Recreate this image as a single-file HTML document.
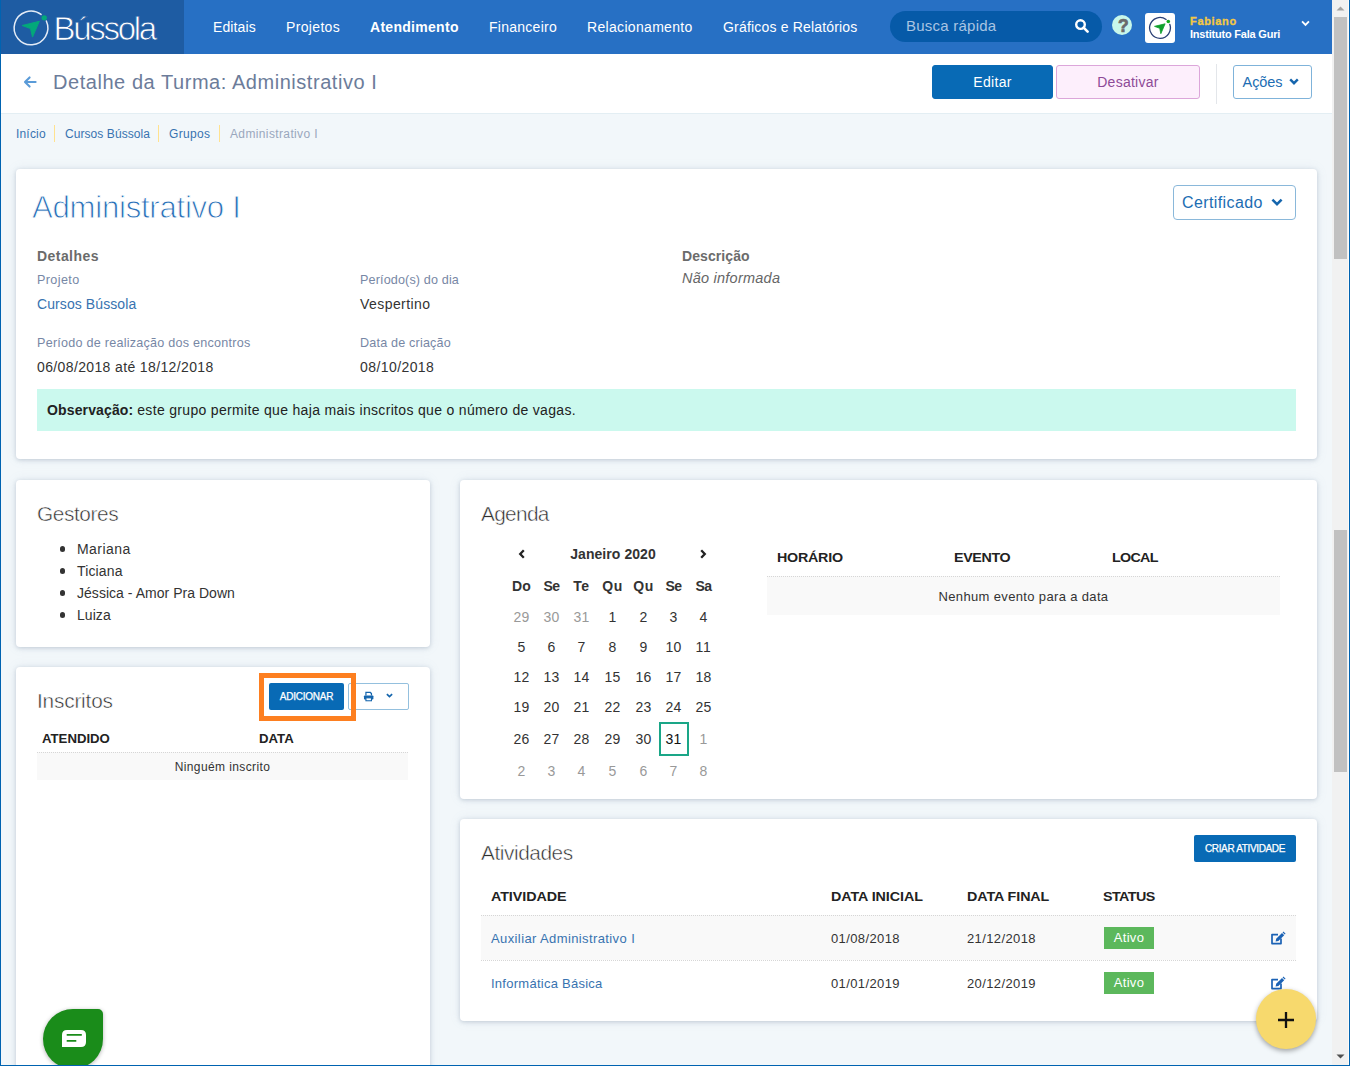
<!DOCTYPE html>
<html lang="pt-BR">
<head>
<meta charset="utf-8">
<title>Detalhe da Turma: Administrativo I</title>
<style>
*{box-sizing:border-box;margin:0;padding:0}
html,body{width:1350px;height:1066px;overflow:hidden}
body{position:relative;background:#f2f7fa;font-family:"Liberation Sans",sans-serif;font-size:14px;color:#222;line-height:20px}
a{text-decoration:none;color:#3873b0}
.abs{position:absolute}
.t{white-space:nowrap;display:inline-block;position:relative}
/* window frame */
#frameL{left:0;top:0;width:1px;height:1066px;background:#0063b1;z-index:50}
#frameR{left:1349px;top:0;width:1px;height:1066px;background:#0063b1;z-index:50}
#frameB{left:0;top:1065px;width:1350px;height:1px;background:#0063b1;z-index:50}
/* scrollbar */
#sb{left:1332px;top:0;width:17px;height:1065px;background:#f1f1f1;z-index:40}
#sb .th{position:absolute;left:2px;width:13px;background:#c1c1c1}
#sb .wl{position:absolute;left:16px;top:0;width:1px;height:1065px;background:#fdfbf8}
#sb svg{position:absolute;left:0}
/* header */
#hdr{left:1px;top:0;width:1331px;height:54px;background:#2770c4}
#logo{left:0;top:0;width:183px;height:54px;background:#1e5ca3}
#logo .name{left:52.6px;top:5.1px;font-size:33px;line-height:46px;color:#fff;font-weight:300;letter-spacing:-1.0px;-webkit-text-stroke:0.75px #1e5ca3}
.nav{top:0;height:53px;line-height:53px;color:#fff;font-size:14px}
#search{left:889px;top:11px;width:212px;height:31px;border-radius:15.5px;background:#065aa8}
#search .ph{left:16px;top:0;line-height:29px;font-size:15px;color:#a9c4e2}
#help{left:1110.9px;top:14.7px;width:20.5px;height:20.5px;border-radius:50%;background:#c8f7ea;color:#6b6b6b;font-weight:700;font-size:17.5px;line-height:21px;text-align:center;-webkit-text-stroke:0.7px #6b6b6b}
#avatar{left:1144px;top:13px;width:30px;height:30px;border-radius:3px;background:#fff}
#uname{left:1189px;top:13.6px;font-size:11px;line-height:14px;font-weight:700;letter-spacing:0.45px;-webkit-text-stroke:0.3px #f3c844;color:#f3c844}
#uorg{left:1189px;top:27px;letter-spacing:-0.29px;font-size:11px;line-height:14px;font-weight:600;color:#fff}
/* subheader */
#sub{left:1px;top:54px;width:1331px;height:60px;background:#fff;border-bottom:1px solid #e3eef3}
#title{left:52px;top:13px;font-size:20px;line-height:30px;color:#6c7c9a}
.btn{position:absolute;top:11px;height:34px;border-radius:3px;text-align:center;line-height:32px;font-size:14px;border:1px solid transparent}
#bEdit{left:931px;width:121px;background:#086ab5;color:#fff;border-color:#086ab5}
#bDes{left:1055px;width:144px;background:#fdeffc;color:#8d4a97;border-color:#dca6da}
#bAc{left:1232px;width:79px;background:#fff;color:#1c6db3;border-color:#7fb3da;font-size:14.5px}
#vsep{left:1215px;top:10px;width:1px;height:40px;background:#e3e6ea}
/* breadcrumb */
.bc{top:124px;font-size:12px;line-height:20px;color:#3873b0}
.bcs{top:125px;width:1px;height:17px;background:#ffe28f}
/* cards */
.card{background:#fff;border-radius:4px;box-shadow:0 1px 4px rgba(95,115,140,.3),0 0 12px rgba(120,150,180,.11)}
.h2{font-size:20.8px;line-height:28px;font-weight:300;color:#2e2e2e;-webkit-text-stroke:0.5px #fff}
.lbl{font-size:12.6px;line-height:20px;color:#7787a5}
.val{font-size:14px;line-height:20px;color:#333}
.th{font-family:"Liberation Sans",sans-serif;font-weight:700;color:#222;font-size:13px;line-height:20px}
.th .t{transform:scaleX(1.1);transform-origin:0 50%}
.sbtn{position:absolute;height:27px;border-radius:2px;background:#086ab5;color:#fff;font-size:10px;line-height:27px;-webkit-text-stroke:0.25px #fff;text-align:center}
.cal{font-size:14px;line-height:20px;color:#333;text-align:center;width:30px;margin-left:-15px}
.cal.o{color:#999}
.cal.b{font-weight:700}
.cal.td{color:#111}
.row{left:21px;height:1px;border-top:1px dotted #d6d6d6}
.badge{position:absolute;width:50px;height:22px;background:#5cb85c;color:#fff;font-size:13px;line-height:20px;text-align:center}
</style>
</head>
<body>
<!-- header -->
<div id="hdr" class="abs">
  <div id="logo" class="abs">
    <svg class="abs" style="left:10.2px;top:7.95px" width="40" height="40" viewBox="0 0 40 40">
      <path d="M30.05 6.47 A16.85 16.85 0 1 0 35.34 13.04" fill="none" stroke="#e3ebf6" stroke-width="1.5" stroke-linecap="round"/>
      <circle cx="33.2" cy="9.85" r="2.7" fill="#03a87a"/>
      <path d="M28.3 13.3 L11.2 17.5 L19.5 20.6 L21.5 29.1 Z" fill="#03a87a" stroke="#03a87a" stroke-width="1" stroke-linejoin="round"/>
    </svg>
    <div class="abs name"><span class="t" style="letter-spacing:-2.31px;top:1.00px">Bússola</span></div>
  </div>
  <div class="abs nav" style="left:212px"><span class="t" style="letter-spacing:0.12px;top:1.00px">Editais</span></div>
  <div class="abs nav" style="left:285px"><span class="t" style="letter-spacing:0.34px;top:1.00px">Projetos</span></div>
  <div class="abs nav" style="left:369px;font-weight:600"><span class="t" style="letter-spacing:0.29px;top:1.00px">Atendimento</span></div>
  <div class="abs nav" style="left:488px"><span class="t" style="letter-spacing:0.26px;top:1.00px">Financeiro</span></div>
  <div class="abs nav" style="left:586px"><span class="t" style="letter-spacing:0.32px;top:1.00px">Relacionamento</span></div>
  <div class="abs nav" style="left:722px"><span class="t" style="letter-spacing:0.18px;top:1.00px">Gráficos e Relatórios</span></div>
  <div id="search" class="abs">
    <div class="abs ph"><span class="t" style="letter-spacing:0.24px">Busca rápida</span></div>
    <svg class="abs" style="left:185px;top:8px" width="14" height="14" viewBox="0 0 14 14"><circle cx="5.5" cy="5.6" r="4.3" fill="none" stroke="#fff" stroke-width="2.4"/><path d="M8.6 8.6 L12.6 12.6" stroke="#fff" stroke-width="2.6" stroke-linecap="round"/></svg>
  </div>
  <div id="help" class="abs"><span class="t" style="letter-spacing:-2.34px;top:1.00px">?</span></div>
  <div id="avatar" class="abs">
    <svg class="abs" style="left:3px;top:3px" width="24" height="24" viewBox="0 0 24 24">
      <path d="M18.11 3.49 A10.4 10.4 0 1 0 21.77 8.34" fill="none" stroke="#2a3f75" stroke-width="1.3" stroke-linecap="round"/>
      <circle cx="20.3" cy="5.5" r="1.8" fill="#12ab1e"/>
      <path d="M17.1 7.8 L6.5 10.35 L11.7 12.3 L12.85 17.7 Z" fill="#0fa02c" stroke="#0fa02c" stroke-width="0.8" stroke-linejoin="round"/>
    </svg>
  </div>
  <div id="uname" class="abs"><span class="t" style="letter-spacing:0.67px">Fabiano</span></div>
  <div id="uorg" class="abs"><span class="t" style="letter-spacing:-0.21px">Instituto Fala Guri</span></div>
  <svg class="abs" style="left:1299.6px;top:20px" width="9" height="7.2" viewBox="0 0 10 8"><path d="M1.2 1.6 L5 5.4 L8.8 1.6" fill="none" stroke="#fff" stroke-width="2.1"/></svg>
</div>
<!-- subheader -->
<div id="sub" class="abs">
  <svg class="abs" style="left:22px;top:21px" width="14" height="14" viewBox="0 0 14 14"><path d="M6.6 2.4 L2 7 L6.6 11.6 M2.2 7 H12.6" fill="none" stroke="#5a9bd8" stroke-width="2.1" stroke-linecap="round" stroke-linejoin="round"/></svg>
  <div id="title" class="abs"><span class="t" style="letter-spacing:0.55px">Detalhe da Turma: Administrativo I</span></div>
  <div id="bEdit" class="btn"><span class="t" style="letter-spacing:0.30px">Editar</span></div>
  <div id="bDes" class="btn"><span class="t" style="letter-spacing:0.26px">Desativar</span></div>
  <div id="vsep" class="abs"></div>
  <div id="bAc" class="btn"><span class="t" style="margin-right:20px;letter-spacing:-0.08px">Ações</span>
    <svg class="abs" style="left:55px;top:11.5px" width="10" height="8" viewBox="0 0 10 8"><path d="M1.2 1.4 L5 5.2 L8.8 1.4" fill="none" stroke="#1565ad" stroke-width="2.4"/></svg>
  </div>
</div>
<!-- breadcrumb -->
<div class="abs bc" style="left:16px"><span class="t" style="letter-spacing:0.18px">Início</span></div>
<div class="abs bcs" style="left:54px"></div>
<div class="abs bc" style="left:65px"><span class="t" style="letter-spacing:0.07px">Cursos Bússola</span></div>
<div class="abs bcs" style="left:158px"></div>
<div class="abs bc" style="left:169px"><span class="t" style="letter-spacing:0.32px">Grupos</span></div>
<div class="abs bcs" style="left:219px"></div>
<div class="abs bc" style="left:230px;color:#9aa7bd"><span class="t" style="letter-spacing:0.37px">Administrativo I</span></div>

<!-- card 1 -->
<div class="abs card" id="c1" style="left:16px;top:169px;width:1301px;height:290px">
  <div class="abs" style="left:16px;top:14px;font-size:31.2px;line-height:48px;font-weight:300;color:#2a70b8;-webkit-text-stroke:0.9px #fff"><span class="t" style="letter-spacing:-0.28px;top:1.00px">Administrativo I</span></div>
  <div class="abs" style="left:1157px;top:16px;width:123px;height:35px;border:1px solid #8ab8da;border-radius:4px;color:#1c6db3;font-size:16px;line-height:33px">
    <span class="t" style="left:8px;letter-spacing:0.39px">Certificado</span>
    <svg class="abs" style="left:97px;top:12px" width="12" height="9" viewBox="0 0 12 9"><path d="M1.4 1.6 L6 6.2 L10.6 1.6" fill="none" stroke="#1565ad" stroke-width="2.5"/></svg>
  </div>
  <div class="abs" style="left:21px;top:77px;font-weight:700;color:#6b6b6b;font-size:14px"><span class="t" style="letter-spacing:0.44px">Detalhes</span></div>
  <div class="abs lbl" style="left:21px;top:101px"><span class="t" style="letter-spacing:0.39px">Projeto</span></div>
  <div class="abs val" style="left:21px;top:125px;color:#3873b0"><span class="t" style="letter-spacing:0.09px">Cursos Bússola</span></div>
  <div class="abs lbl" style="left:21px;top:164px"><span class="t" style="letter-spacing:0.24px">Período de realização dos encontros</span></div>
  <div class="abs val" style="left:21px;top:188px"><span class="t" style="letter-spacing:0.37px">06/08/2018 até 18/12/2018</span></div>
  <div class="abs lbl" style="left:344px;top:101px"><span class="t" style="letter-spacing:0.14px">Período(s) do dia</span></div>
  <div class="abs val" style="left:344px;top:125px"><span class="t" style="letter-spacing:0.44px">Vespertino</span></div>
  <div class="abs lbl" style="left:344px;top:164px"><span class="t" style="letter-spacing:0.18px">Data de criação</span></div>
  <div class="abs val" style="left:344px;top:188px"><span class="t" style="letter-spacing:0.42px">08/10/2018</span></div>
  <div class="abs" style="left:666px;top:77px;font-weight:700;color:#6b6b6b;font-size:14px"><span class="t" style="letter-spacing:0.09px">Descrição</span></div>
  <div class="abs val" style="left:666px;top:99px;font-style:italic;color:#666;font-size:14.5px"><span class="t" style="letter-spacing:0.24px">Não informada</span></div>
  <div class="abs" style="left:21px;top:220px;width:1259px;height:42px;background:#cbf9ee"></div>
  <div class="abs val" style="left:31px;top:231px;color:#222"><span class="t" style="font-weight:700;letter-spacing:0.14px">Observação:</span> <span class="t" style="letter-spacing:0.32px">este grupo permite que haja mais inscritos que o número de vagas.</span></div>
</div>

<!-- gestores -->
<div class="abs card" id="c2" style="left:16px;top:480px;width:414px;height:167px">
  <div class="abs h2" style="left:21px;top:20px"><span class="t" style="letter-spacing:-0.39px">Gestores</span></div>
  <div class="abs" style="left:43.7px;top:66.3px;width:5.5px;height:5.5px;border-radius:50%;background:#333"></div>
  <div class="abs" style="left:43.7px;top:88.3px;width:5.5px;height:5.5px;border-radius:50%;background:#333"></div>
  <div class="abs" style="left:43.7px;top:110.3px;width:5.5px;height:5.5px;border-radius:50%;background:#333"></div>
  <div class="abs" style="left:43.7px;top:132.3px;width:5.5px;height:5.5px;border-radius:50%;background:#333"></div>
  <div class="abs val" style="left:61px;top:58px;line-height:22px"><span class="t" style="letter-spacing:0.46px">Mariana</span></div>
  <div class="abs val" style="left:61px;top:80px;line-height:22px"><span class="t" style="letter-spacing:0.15px">Ticiana</span></div>
  <div class="abs val" style="left:61px;top:102px;line-height:22px"><span class="t" style="letter-spacing:0.03px">Jéssica - Amor Pra Down</span></div>
  <div class="abs val" style="left:61px;top:124px;line-height:22px"><span class="t" style="letter-spacing:0.06px">Luiza</span></div>
</div>

<!-- inscritos -->
<div class="abs card" id="c3" style="left:16px;top:667px;width:414px;height:420px">
  <div class="abs h2" style="left:21px;top:20px"><span class="t" style="letter-spacing:-0.19px">Inscritos</span></div>
  <div class="abs" style="left:243px;top:6px;width:97px;height:48px;border:5px solid #fd7f20;z-index:3"></div>
  <div class="sbtn" style="left:253px;top:16px;width:75px"><span class="t" style="letter-spacing:-0.25px">ADICIONAR</span></div>
  <div class="abs" style="left:332px;top:16px;width:61px;height:27px;border:1px solid #94c0de;border-radius:2px;background:#fff"></div>
  <svg class="abs" style="left:347.3px;top:23.8px" width="11.4" height="11.4" viewBox="0 0 14 14"><path d="M3.6 5.6 V1.8 H9 L10.4 3.2 V5.6" fill="none" stroke="#1565ad" stroke-width="1.5"/><rect x="1.2" y="5.6" width="11.6" height="5" rx="1" fill="#1565ad"/><rect x="3.6" y="8.4" width="6.8" height="3.6" fill="#fff" stroke="#1565ad" stroke-width="1.3"/></svg>
  <svg class="abs" style="left:370.3px;top:26.3px" width="7" height="5.25" viewBox="0 0 8 6"><path d="M1 1.2 L4 4.2 L7 1.2" fill="none" stroke="#1565ad" stroke-width="1.9"/></svg>
  <div class="abs th" style="left:26px;top:62px;font-size:12px"><span class="t" style="letter-spacing:-0.01px">ATENDIDO</span></div>
  <div class="abs th" style="left:243px;top:62px;font-size:12px"><span class="t" style="letter-spacing:0.01px">DATA</span></div>
  <div class="abs" style="left:21px;top:85px;width:371px;height:28px;background:#f9f9f9;border-top:1px dotted #d6d6d6"></div>
  <div class="abs" style="left:21px;top:90px;width:371px;text-align:center;font-size:12px;color:#333"><span class="t" style="letter-spacing:0.39px">Ninguém inscrito</span></div>
</div>

<!-- agenda -->
<div class="abs card" id="c4" style="left:460px;top:480px;width:857px;height:319px">
  <div class="abs h2" style="left:21px;top:20px"><span class="t" style="letter-spacing:-0.67px">Agenda</span></div>
  <svg class="abs" style="left:58px;top:69px" width="8" height="10" viewBox="0 0 8 10"><path d="M5.8 1.2 L2.2 5 L5.8 8.8" fill="none" stroke="#222" stroke-width="2.3"/></svg>
  <svg class="abs" style="left:239.2px;top:69px" width="8" height="10" viewBox="0 0 8 10"><path d="M2.2 1.2 L5.8 5 L2.2 8.8" fill="none" stroke="#222" stroke-width="2.3"/></svg>
  <div class="abs" style="left:93px;top:64px;width:120px;text-align:center;font-weight:700;font-size:14px;color:#333"><span class="t" style="letter-spacing:0.06px">Janeiro 2020</span></div>
  <div class="abs cal b" style="left:61.5px;top:96px"><span class="t" style="letter-spacing:0.18px">Do</span></div>
  <div class="abs cal b" style="left:91.5px;top:96px"><span class="t" style="letter-spacing:-0.57px">Se</span></div>
  <div class="abs cal b" style="left:121.5px;top:96px"><span class="t" style="letter-spacing:0.54px">Te</span></div>
  <div class="abs cal b" style="left:152.5px;top:96px"><span class="t" style="letter-spacing:0.45px">Qu</span></div>
  <div class="abs cal b" style="left:183.5px;top:96px"><span class="t" style="letter-spacing:0.45px">Qu</span></div>
  <div class="abs cal b" style="left:213.5px;top:96px"><span class="t" style="letter-spacing:-0.57px">Se</span></div>
  <div class="abs cal b" style="left:243.5px;top:96px"><span class="t" style="letter-spacing:-0.48px">Sa</span></div>
  <div class="abs cal o" style="left:61.5px;top:127px"><span class="t" style="letter-spacing:0.22px">29</span></div>
  <div class="abs cal o" style="left:91.5px;top:127px"><span class="t" style="letter-spacing:0.22px">30</span></div>
  <div class="abs cal o" style="left:121.5px;top:127px"><span class="t" style="letter-spacing:0.22px">31</span></div>
  <div class="abs cal" style="left:152.5px;top:127px"><span class="t" style="letter-spacing:0.22px">1</span></div>
  <div class="abs cal" style="left:183.5px;top:127px"><span class="t" style="letter-spacing:0.22px">2</span></div>
  <div class="abs cal" style="left:213.5px;top:127px"><span class="t" style="letter-spacing:0.22px">3</span></div>
  <div class="abs cal" style="left:243.5px;top:127px"><span class="t" style="letter-spacing:0.22px">4</span></div>
  <div class="abs cal" style="left:61.5px;top:157px"><span class="t" style="letter-spacing:0.22px">5</span></div>
  <div class="abs cal" style="left:91.5px;top:157px"><span class="t" style="letter-spacing:0.22px">6</span></div>
  <div class="abs cal" style="left:121.5px;top:157px"><span class="t" style="letter-spacing:0.22px">7</span></div>
  <div class="abs cal" style="left:152.5px;top:157px"><span class="t" style="letter-spacing:0.22px">8</span></div>
  <div class="abs cal" style="left:183.5px;top:157px"><span class="t" style="letter-spacing:0.22px">9</span></div>
  <div class="abs cal" style="left:213.5px;top:157px"><span class="t" style="letter-spacing:0.22px">10</span></div>
  <div class="abs cal" style="left:243.5px;top:157px"><span class="t" style="letter-spacing:0.73px">11</span></div>
  <div class="abs cal" style="left:61.5px;top:187px"><span class="t" style="letter-spacing:0.22px">12</span></div>
  <div class="abs cal" style="left:91.5px;top:187px"><span class="t" style="letter-spacing:0.22px">13</span></div>
  <div class="abs cal" style="left:121.5px;top:187px"><span class="t" style="letter-spacing:0.22px">14</span></div>
  <div class="abs cal" style="left:152.5px;top:187px"><span class="t" style="letter-spacing:0.22px">15</span></div>
  <div class="abs cal" style="left:183.5px;top:187px"><span class="t" style="letter-spacing:0.22px">16</span></div>
  <div class="abs cal" style="left:213.5px;top:187px"><span class="t" style="letter-spacing:0.22px">17</span></div>
  <div class="abs cal" style="left:243.5px;top:187px"><span class="t" style="letter-spacing:0.22px">18</span></div>
  <div class="abs cal" style="left:61.5px;top:217px"><span class="t" style="letter-spacing:0.22px">19</span></div>
  <div class="abs cal" style="left:91.5px;top:217px"><span class="t" style="letter-spacing:0.22px">20</span></div>
  <div class="abs cal" style="left:121.5px;top:217px"><span class="t" style="letter-spacing:0.22px">21</span></div>
  <div class="abs cal" style="left:152.5px;top:217px"><span class="t" style="letter-spacing:0.22px">22</span></div>
  <div class="abs cal" style="left:183.5px;top:217px"><span class="t" style="letter-spacing:0.22px">23</span></div>
  <div class="abs cal" style="left:213.5px;top:217px"><span class="t" style="letter-spacing:0.22px">24</span></div>
  <div class="abs cal" style="left:243.5px;top:217px"><span class="t" style="letter-spacing:0.22px">25</span></div>
  <div class="abs cal" style="left:61.5px;top:249px"><span class="t" style="letter-spacing:0.22px">26</span></div>
  <div class="abs cal" style="left:91.5px;top:249px"><span class="t" style="letter-spacing:0.22px">27</span></div>
  <div class="abs cal" style="left:121.5px;top:249px"><span class="t" style="letter-spacing:0.22px">28</span></div>
  <div class="abs cal" style="left:152.5px;top:249px"><span class="t" style="letter-spacing:0.22px">29</span></div>
  <div class="abs cal" style="left:183.5px;top:249px"><span class="t" style="letter-spacing:0.22px">30</span></div>
  <div class="abs cal td" style="left:213.5px;top:249px"><span class="t" style="letter-spacing:0.22px">31</span></div>
  <div class="abs cal o" style="left:243.5px;top:249px"><span class="t" style="letter-spacing:0.22px">1</span></div>
  <div class="abs cal o" style="left:61.5px;top:281px"><span class="t" style="letter-spacing:0.22px">2</span></div>
  <div class="abs cal o" style="left:91.5px;top:281px"><span class="t" style="letter-spacing:0.22px">3</span></div>
  <div class="abs cal o" style="left:121.5px;top:281px"><span class="t" style="letter-spacing:0.22px">4</span></div>
  <div class="abs cal o" style="left:152.5px;top:281px"><span class="t" style="letter-spacing:0.22px">5</span></div>
  <div class="abs cal o" style="left:183.5px;top:281px"><span class="t" style="letter-spacing:0.22px">6</span></div>
  <div class="abs cal o" style="left:213.5px;top:281px"><span class="t" style="letter-spacing:0.22px">7</span></div>
  <div class="abs cal o" style="left:243.5px;top:281px"><span class="t" style="letter-spacing:0.22px">8</span></div>
  <div class="abs" style="left:199px;top:242px;width:30px;height:34px;border:2px solid #1aa687"></div>
  <div class="abs th" style="left:317px;top:67px"><span class="t" style="letter-spacing:-0.23px;top:1.00px">HORÁRIO</span></div>
  <div class="abs th" style="left:494px;top:67px"><span class="t" style="letter-spacing:-0.35px;top:1.00px">EVENTO</span></div>
  <div class="abs th" style="left:652px;top:67px"><span class="t" style="letter-spacing:-0.64px;top:1.00px">LOCAL</span></div>
  <div class="abs" style="left:307px;top:96px;width:513px;height:39px;background:#f9f9f9;border-top:1px dotted #d6d6d6"></div>
  <div class="abs" style="left:307px;top:106px;width:513px;text-align:center;font-size:13px;color:#333"><span class="t" style="letter-spacing:0.35px;top:1.00px">Nenhum evento para a data</span></div>
</div>

<!-- atividades -->
<div class="abs card" id="c5" style="left:460px;top:819px;width:857px;height:202px">
  <div class="abs h2" style="left:21px;top:20px"><span class="t" style="letter-spacing:-0.43px">Atividades</span></div>
  <div class="sbtn" style="left:734px;top:16px;width:102px"><span class="t" style="letter-spacing:-0.35px">CRIAR ATIVIDADE</span></div>
  <div class="abs th" style="left:31px;top:67px"><span class="t" style="letter-spacing:-0.06px;top:1.00px">ATIVIDADE</span></div>
  <div class="abs th" style="left:371px;top:67px"><span class="t" style="letter-spacing:-0.06px;top:1.00px">DATA INICIAL</span></div>
  <div class="abs th" style="left:507px;top:67px"><span class="t" style="letter-spacing:-0.08px;top:1.00px">DATA FINAL</span></div>
  <div class="abs th" style="left:643px;top:67px"><span class="t" style="letter-spacing:-0.52px;top:1.00px">STATUS</span></div>
  <div class="abs" style="left:21px;top:96px;width:815px;height:45px;background:#f9f9f9;border-top:1px dotted #d6d6d6"></div>
  <div class="abs" style="left:21px;top:141px;width:815px;height:1px;border-top:1px dotted #d6d6d6"></div>
  <div class="abs" style="left:31px;top:109px;font-size:13px;color:#3873b0"><span class="t" style="letter-spacing:0.39px;top:1.00px">Auxiliar Administrativo I</span></div>
  <div class="abs" style="left:371px;top:109px;font-size:13px;color:#333"><span class="t" style="letter-spacing:0.39px;top:1.00px">01/08/2018</span></div>
  <div class="abs" style="left:507px;top:109px;font-size:13px;color:#333"><span class="t" style="letter-spacing:0.39px;top:1.00px">21/12/2018</span></div>
  <div class="badge" style="left:644px;top:108px"><span class="t" style="letter-spacing:0.31px;top:1.00px">Ativo</span></div>
  <div class="abs" style="left:31px;top:154px;font-size:13px;color:#3873b0"><span class="t" style="letter-spacing:0.26px;top:1.00px">Informática Básica</span></div>
  <div class="abs" style="left:371px;top:154px;font-size:13px;color:#333"><span class="t" style="letter-spacing:0.39px;top:1.00px">01/01/2019</span></div>
  <div class="abs" style="left:507px;top:154px;font-size:13px;color:#333"><span class="t" style="letter-spacing:0.39px;top:1.00px">20/12/2019</span></div>
  <div class="badge" style="left:644px;top:153px"><span class="t" style="letter-spacing:0.31px;top:1.00px">Ativo</span></div>
  <svg class="abs edit" style="left:810px;top:112px" width="16" height="15" viewBox="0 0 16 15"><path d="M11 7.6 V12.6 H2 V3.6 H8" fill="none" stroke="#1b62b5" stroke-width="1.7" stroke-linejoin="round"/><path d="M5.6 10.6 L6.2 7.8 L12 2 L14.2 4.2 L8.4 10 Z" fill="#1b62b5"/><path d="M12.6 1.4 L13.4 0.6 L15.6 2.8 L14.8 3.6 Z" fill="#1b62b5"/></svg>
  <svg class="abs edit" style="left:810px;top:157px" width="16" height="15" viewBox="0 0 16 15"><path d="M11 7.6 V12.6 H2 V3.6 H8" fill="none" stroke="#1b62b5" stroke-width="1.7" stroke-linejoin="round"/><path d="M5.6 10.6 L6.2 7.8 L12 2 L14.2 4.2 L8.4 10 Z" fill="#1b62b5"/><path d="M12.6 1.4 L13.4 0.6 L15.6 2.8 L14.8 3.6 Z" fill="#1b62b5"/></svg>
</div>

<!-- floating buttons -->
<div class="abs" style="left:1256px;top:989px;width:60px;height:60px;border-radius:50%;background:#f7d96d;box-shadow:0 2px 5px rgba(0,0,0,.35);z-index:20"></div>
<svg class="abs" style="left:1278px;top:1012px;z-index:21" width="16" height="16" viewBox="0 0 16 16"><path d="M8 0 V16 M0 8 H16" stroke="#111" stroke-width="2.3"/></svg>
<div class="abs" style="left:43px;top:1009px;width:60px;height:60px;border-radius:30px 5px 30px 30px;background:#1a8c1a;box-shadow:0 1px 4px rgba(0,0,0,.3);z-index:20"></div>
<svg class="abs" style="left:62px;top:1030px;z-index:21" width="24" height="17" viewBox="0 0 24 17"><path d="M5 0 H19 Q24 0 24 5 V12 Q24 17 19 17 H0 V5 Q0 0 5 0 Z" fill="#fff"/><path d="M4.7 4.9 H19.8 M4.7 10.9 H14.3" stroke="#1a8c1a" stroke-width="1.7"/></svg>

<!-- scrollbar and window frame -->
<div id="sb" class="abs">
  <div class="th" style="top:17px;height:242px"></div>
  <div class="th" style="top:530px;height:242px"></div>
  <div class="wl"></div>
  <svg style="top:0" width="17" height="17" viewBox="0 0 17 17"><path d="M4.5 10.5 L8.5 6.5 L12.5 10.5 Z" fill="#a3a3a3"/></svg>
  <svg style="top:1048px" width="17" height="17" viewBox="0 0 17 17"><path d="M4.5 6.5 L8.5 10.5 L12.5 6.5 Z" fill="#505050"/></svg>
</div>
<div id="frameL" class="abs"></div><div id="frameR" class="abs"></div><div id="frameB" class="abs"></div>
</body>
</html>
